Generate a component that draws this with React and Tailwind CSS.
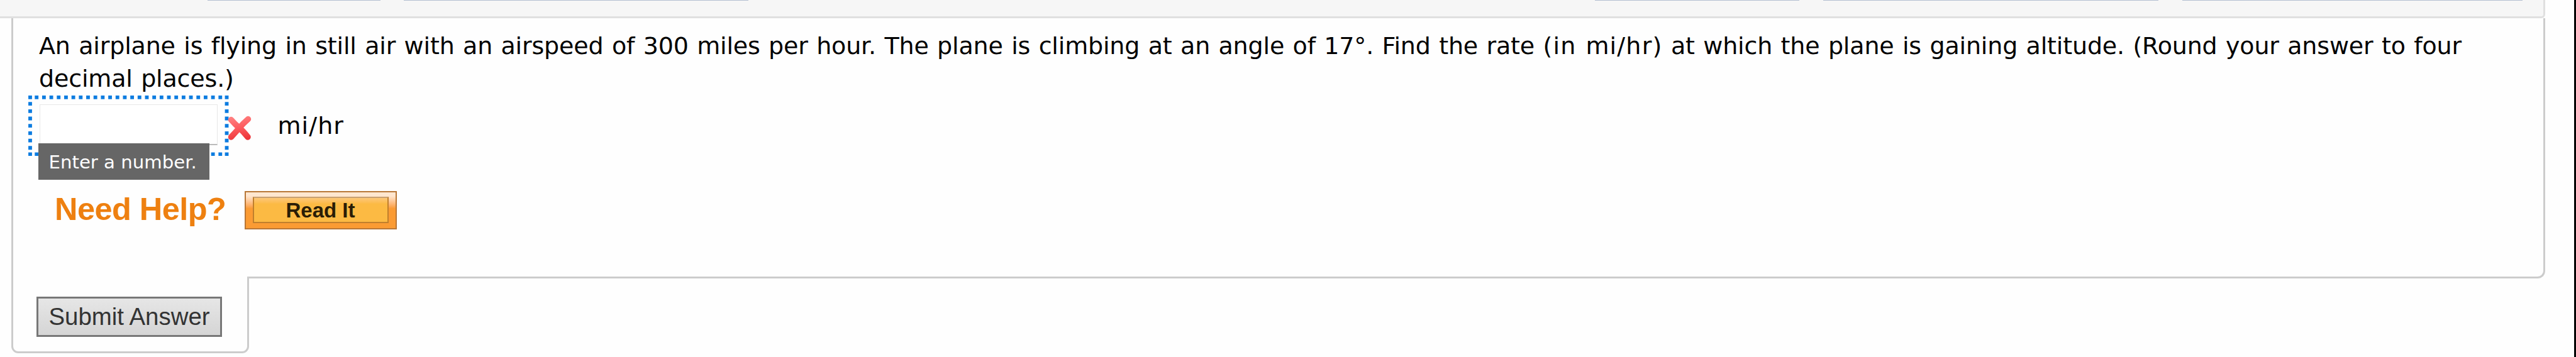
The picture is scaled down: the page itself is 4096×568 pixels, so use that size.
const leftTabs = [
  { id: 1, width: "w-[275px]" },
  { id: 2, width: "w-[548px]" },
];

const rightTabs = [
  { id: 3, width: "w-[325px]" },
  { id: 4, width: "w-[533px]" },
  { id: 5, width: "w-[541px]" },
];

function TabEdge({ width }) {
  return <div className={`${width} h-px bg-[#b4bfd0]`} />;
}

// square dots, closer together next to the corners
function FocusRing() {
  return (
    <svg
      viewBox="0 0 436 132"
      className="absolute left-0 top-0 w-[318.5px] h-[96.4px]"
      stroke="#0c7ce0"
      strokeWidth="8"
    >
      <path d="M14 4H422 M14 128H422" strokeDasharray="8 8" />
      <path d="M4 14V118 M432 14V118" strokeDasharray="8 8" />
      <path d="M0 4H8 M428 4H436 M0 128H8 M428 128H436" />
    </svg>
  );
}

function WrongMark() {
  return (
    <svg viewBox="0 0 38 40" className="w-[38px] h-[40px]" fill="none">
      <defs>
        <linearGradient id="wrong" gradientUnits="userSpaceOnUse" x1="8" y1="0" x2="16" y2="40">
          <stop offset="0" stopColor="#ff8585" />
          <stop offset="0.5" stopColor="#fd5c5f" />
          <stop offset="1" stopColor="#ec3438" />
        </linearGradient>
      </defs>
      <path
        d="M5.5 6.5 Q12 14 18.5 19.5 T32 34 M32.5 5.5 Q25 12 18.5 19.5 T5.5 34"
        stroke="url(#wrong)"
        strokeWidth="9.5"
        strokeLinecap="round"
      />
    </svg>
  );
}

export default function App() {
  return (
    <div className="flex w-[4096px] h-[568px] overflow-hidden bg-[#fefefe] border-r-[3px] border-black">
      <div className="w-[4047px] shrink-0 flex flex-col">

        {/* Header */}
        <div className="h-[29px] shrink-0 flex items-start justify-between pl-[330px] pr-[33px] bg-[#f6f6f6] border-b-[3px] border-r-[3px] border-[#e0e0e0] rounded-br-[6px]">
          <div className="flex gap-[37px]">
            {leftTabs.map((tab) => (
              <TabEdge key={tab.id} width={tab.width} />
            ))}
          </div>
          <div className="flex gap-[38px]">
            {rightTabs.map((tab) => (
              <TabEdge key={tab.id} width={tab.width} />
            ))}
          </div>
        </div>

        {/* Question */}
        <div className="ml-[18px] h-[414px] shrink-0 border-[3px] border-t-0 border-[#ccc] rounded-br-[12px] font-['DejaVu_Sans',sans-serif] text-black">
          <p className="pt-[18px] pl-[41px] text-[38px] leading-[52.4px] tracking-[-0.16px] [word-spacing:1.52px] whitespace-nowrap">
            An airplane is flying in still air with an airspeed of 300 miles per hour. The plane is climbing at an angle of 17°. Find the rate <span className="tracking-[1.2px]">(in mi/hr)</span> at which the plane is gaining altitude. (Round your answer to four
            <br />
            decimal places.)
          </p>

          {/* Answer */}
          <div className="flex items-start pl-[24px]">
            <div className="relative w-[318.5px] h-[96px] shrink-0 pl-[17.5px] pt-[14.5px]">
              <input
                readOnly
                className="block w-[283px] h-[65px] bg-white border border-[#e8e8e8] border-b-2 border-b-[#bbb] outline-none"
              />
              <FocusRing />
              <div className="absolute left-[16px] top-[76px] w-[272px] h-[58px] pt-px pl-[16.5px] bg-[#666] text-white text-[29.2px] leading-[58px] whitespace-nowrap">
                Enter a number.
              </div>
            </div>
            <div className="relative mt-[32px] -ml-[2px]">
              <WrongMark />
            </div>
            <span className="ml-[42px] mt-[22px] text-[38px] leading-[52px] tracking-[1.1px]">mi/hr</span>
          </div>

          {/* Help */}
          <div className="flex items-start mt-[56px] pl-[66px] font-['Liberation_Sans',sans-serif] font-bold">
            <span className="w-[301.5px] text-[50.5px] leading-[58px] tracking-[-0.55px] text-[#ee8010] whitespace-nowrap">Need Help?</span>
            <button className="w-[242px] h-[61px] px-[11px] py-[7.5px] bg-linear-to-b from-[#ffe6cf] from-10% via-[#fb9b33] via-45% to-[#fb9b33] border-2 border-[#b87636]">
              <div className="h-[42px] bg-linear-to-b from-[#fdc778] to-[#fcba43] to-25% border-2 border-[#c07f2c] border-t-[#c79f72] text-[33px] leading-[40px] text-[#2a1d06]">
                Read It
              </div>
            </button>
          </div>
        </div>

        {/* Submit */}
        <div className="relative ml-[18px] -mt-[3px] w-[378px] h-[122px] pt-[32px] pl-[37px] bg-[#fefefe] border-[3px] border-t-0 border-[#ccc] rounded-b-[11px]">
          <button className="w-[295px] h-[64px] pb-[2px] border-[3px] border-[#777] bg-linear-to-b from-[#e6e6e6] to-[#d5d5d5] font-['Liberation_Sans',sans-serif] text-[38.4px] text-[#333] whitespace-nowrap">
            Submit Answer
          </button>
        </div>
      </div>
    </div>
  );
}
